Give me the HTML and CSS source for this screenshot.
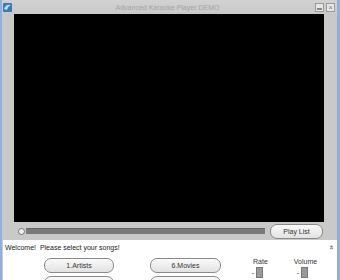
FILE: index.html
```html
<!DOCTYPE html>
<html>
<head>
  <title>Advanced Karaoke Player DEMO</title>
  <link rel="stylesheet" href="styles.css">
</head>
<body>
  <div class="window">
    <div class="titlebar">
      <svg class="app-icon" width="9" height="9" viewBox="0 0 9 9">
        <rect x="0" y="0" width="9" height="9" rx="1" fill="#3c78b8"/>
        <path d="M1 6 Q3 1 8 2 Q5 3 4 7 Z" fill="#bfe0ff"/>
      </svg>
      <div class="title">Advanced Karaoke Player DEMO</div>
      <div class="title-buttons">
        <span class="tbtn"><span class="min-glyph"></span></span>
        <span class="tbtn close">&#215;</span>
      </div>
    </div>

    <div class="video"></div>

    <div class="transport">
      <div class="seek">
        <span class="knob"></span>
        <span class="track"></span>
      </div>
      <button class="pill playlist">Play List</button>
    </div>

    <div class="panel">
      <div class="welcome">
        <span>Welcome!&nbsp; Please select your songs!</span>
        <span class="collapse">&#171;</span>
      </div>
      <div class="controls">
        <div class="song-buttons">
          <button class="pill song">1.Artists</button>
          <button class="pill song">6.Movies</button>
          <button class="pill song"></button>
          <button class="pill song"></button>
        </div>
        <div class="sliders">
          <div class="slider">
            <div class="slider-label">Rate</div>
            <div class="slider-row"><span class="dash">-</span><span class="thumb"></span></div>
          </div>
          <div class="slider">
            <div class="slider-label">Volume</div>
            <div class="slider-row"><span class="dash">-</span><span class="thumb"></span></div>
          </div>
        </div>
      </div>
    </div>
  </div>
</body>
</html>
```

FILE: styles.css
```css
body {
  margin: 0;
  width: 340px;
  height: 280px;
  overflow: hidden;
  font-family: "Liberation Sans", Arial, sans-serif;
}
.window {
  height: 280px;
  overflow: hidden;
  box-sizing: border-box;
  border-left: 2px solid #8fb0d8;
  border-right: 3px solid #8fb0d8;
  background: #c9c9c9;
  display: flex;
  flex-direction: column;
}
.titlebar {
  flex: none;
  height: 14px;
  display: flex;
  align-items: center;
  padding: 0 2px 0 1px;
  background: linear-gradient(#d2d2d2, #c9c9c9);
}
.app-icon {
  flex: none;
}
.title {
  flex: 1;
  text-align: center;
  font-size: 7px;
  color: #a4a4a4;
  padding-left: 8px;
}
.title-buttons {
  display: flex;
  gap: 2px;
}
.tbtn {
  width: 7px;
  height: 7px;
  border: 1px solid #9a9a9a;
  background: #e6e6e6;
  display: flex;
  align-items: center;
  justify-content: center;
  font-size: 7px;
  line-height: 7px;
  color: #777;
}
.min-glyph {
  width: 5px;
  height: 2px;
  background: #888;
  margin-top: 4px;
}
.video {
  flex: none;
  height: 208px;
  margin: 0 13px 0 12px;
  background: #000;
}
.transport {
  flex: none;
  height: 18px;
  display: flex;
  align-items: center;
  padding: 0 14px 0 16px;
}
.seek {
  flex: 1;
  display: flex;
  align-items: center;
}
.knob {
  width: 5px;
  height: 5px;
  border-radius: 50%;
  background: #eee;
  border: 1px solid #777;
  flex: none;
}
.track {
  flex: 1;
  height: 5px;
  background: #7a7a7a;
  border-top: 1px solid #666;
  margin-left: 1px;
}
.pill {
  font-family: "Liberation Sans", Arial, sans-serif;
  font-size: 7px;
  color: #333;
  background: linear-gradient(#fafafa, #e2e2e2);
  border: 1px solid #8a8a8a;
  border-radius: 7px;
  padding: 0;
  height: 15px;
}
.playlist {
  width: 53px;
  margin-left: 5px;
}
.panel {
  flex: none;
  height: 40px;
  margin: 0 -1px 0 1px;
  background: #fff;
  padding: 1px 5px 0 2px;
}
.welcome {
  display: flex;
  justify-content: space-between;
  font-size: 7px;
  color: #222;
  height: 12px;
  align-items: center;
}
.collapse {
  transform: rotate(90deg);
  font-size: 8px;
  display: inline-block;
}
.controls {
  display: flex;
  margin-top: 5px;
}
.song-buttons {
  display: grid;
  grid-template-columns: 70px 71px;
  column-gap: 36px;
  row-gap: 3px;
  margin-left: 39px;
}
.song {
  width: 100%;
}
.sliders {
  display: flex;
  margin-left: 32px;
  gap: 26px;
}
.slider {
  display: flex;
  flex-direction: column;
  align-items: center;
  font-size: 7px;
  color: #333;
}
.slider-label {
  margin-top: 0;
}
.slider-row {
  display: flex;
  align-items: center;
  gap: 2px;
  margin-top: 2px;
  margin-left: -6px;
}
.thumb {
  width: 5px;
  height: 9px;
  background: #9a9a9a;
  border: 1px solid #777;
}
```
